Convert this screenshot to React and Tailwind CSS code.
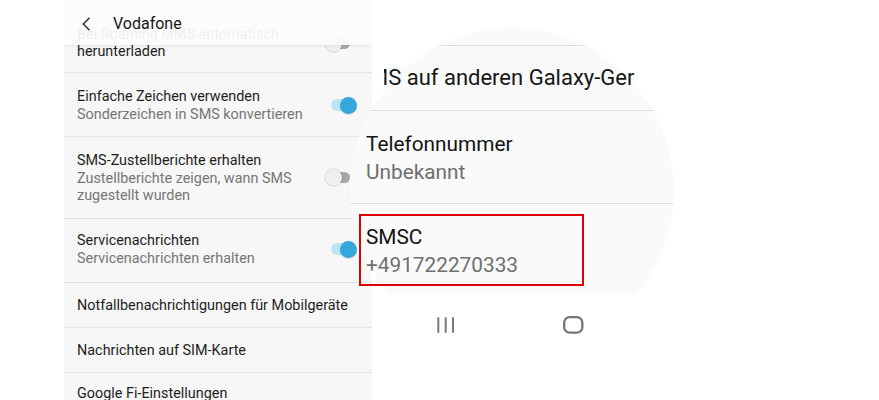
import React from "react";

function Toggle({ on }) {
  return (
    <div className="relative w-[32px] h-[17px] shrink-0">
      <div
        className={
          on
            ? "absolute left-[6px] top-[2.5px] w-[19px] h-[12px] rounded-full bg-[#bde2f3]"
            : "absolute left-[8px] top-[3px] w-[17px] h-[11px] rounded-full bg-[#a6a6a6]"
        }
      />
      <div
        className={
          on
            ? "absolute left-[15px] top-0 w-[17px] h-[17px] rounded-full bg-[#36a7da] shadow-[0_1px_1px_rgba(0,0,0,0.15)]"
            : "absolute left-0 top-0 w-[17px] h-[17px] rounded-full bg-[#efefef] shadow-[0_0_1.5px_rgba(0,0,0,0.35)]"
        }
      />
    </div>
  );
}

function Row({ title, sub, toggle, pad, titleLeading = "leading-[19px]" }) {
  return (
    <div className={`flex items-center gap-[16px] border-b border-[#e4e4e4] pl-[13px] pr-[15px] ${pad}`}>
      <div className="flex-1 min-w-0">
        <div className={`text-[14.4px] ${titleLeading} text-[#1e1e1e]`}>{title}</div>
        {sub && <div className="text-[14.4px] leading-[17px] text-[#767676]">{sub}</div>}
      </div>
      {toggle !== undefined && <Toggle on={toggle} />}
    </div>
  );
}

function LeftPanel() {
  return (
    <div className="relative w-[308px] h-[400px] shrink-0 bg-[#f7f7f7] overflow-hidden">
      <div className="pt-[12px]">
        <Row
          title="Bei Roaming MMS automatisch herunterladen"
          toggle={false}
          pad="pt-[14px] pb-[12px]"
          titleLeading="leading-[17px]"
        />
        <Row
          title="Einfache Zeichen verwenden"
          sub="Sonderzeichen in SMS konvertieren"
          toggle={true}
          pad="pt-[14px] pb-[13px]"
        />
        <Row
          title="SMS-Zustellberichte erhalten"
          sub="Zustellberichte zeigen, wann SMS zugestellt wurden"
          toggle={false}
          pad="pt-[14px] pb-[14px]"
        />
        <Row
          title="Servicenachrichten"
          sub="Servicenachrichten erhalten"
          toggle={true}
          pad="pt-[12px] pb-[15px]"
        />
        <Row title="Notfallbenachrichtigungen für Mobilgeräte" pad="pt-[13px] pb-[12px]" />
        <Row title="Nachrichten auf SIM-Karte" pad="pt-[13px] pb-[12px]" />
        <Row title="Google Fi-Einstellungen" pad="pt-[11px] pb-[12px]" />
      </div>
      <div className="absolute top-0 left-0 right-0 h-[45px] flex items-center pl-[17px] pt-[2px] bg-[#fcfcfc]/[0.94] shadow-[0_1px_3px_rgba(0,0,0,0.07)]">
        <svg width="10" height="14" viewBox="0 0 10 14" className="shrink-0">
          <path d="M8.5 0.8 L2.3 7 L8.5 13.2" fill="none" stroke="#2a2a2a" strokeWidth="1.4" />
        </svg>
        <span className="ml-[22px] text-[16px] text-[#151515]">Vodafone</span>
      </div>
    </div>
  );
}

function Magnifier() {
  return (
    <div className="absolute left-[350px] top-[28px] w-[324px] h-[324px]">
      {/* circle background with clipped dividers */}
      <div className="absolute inset-0 rounded-full bg-[#fafafa] overflow-hidden flex flex-col">
        <div className="h-[17px] shrink-0" />
        <div className="h-px shrink-0 bg-[#dedede]" />
        <div className="h-[64px] shrink-0" />
        <div className="h-px shrink-0 bg-[#dedede]" />
        <div className="h-[92px] shrink-0" />
        <div className="h-px shrink-0 bg-[#dedede]" />
        <div className="h-[91px] shrink-0" />
        <div className="flex-1 bg-white" />
      </div>
      {/* magnified content */}
      <div className="absolute inset-0 flex flex-col text-[20.8px]">
        <div className="h-[18px] shrink-0" />
        <div className="h-[64px] shrink-0 pt-[19px]">
          <div className="ml-[34px] w-[251px] overflow-hidden">
            <div className="ml-[-15px] text-[22px] leading-[26px] whitespace-nowrap text-[#161616]">
              MS auf anderen Galaxy-Geräten synchronisieren
            </div>
          </div>
        </div>
        <div className="h-px shrink-0" />
        <div className="h-[92px] shrink-0 pt-[19px] pl-[16px] leading-[28px]">
          <div className="text-[#131313]">Telefonnummer</div>
          <div className="text-[#6f6f6f]">Unbekannt</div>
        </div>
        <div className="h-px shrink-0" />
        <div className="h-[91px] shrink-0 pt-[19px] pl-[16px] leading-[28px]">
          <div className="text-[#131313]">SMSC</div>
          <div className="text-[#6f6f6f]">+491722270333</div>
        </div>
        <div className="h-[60px] shrink-0 flex items-center pl-[87px] gap-[108px]">
          <svg width="18" height="16" viewBox="0 0 18 16">
            <rect x="0.3" y="0" width="2" height="16" rx="1" fill="#7a7a7a" />
            <rect x="7.7" y="0" width="2" height="16" rx="1" fill="#7a7a7a" />
            <rect x="15" y="0" width="2" height="16" rx="1" fill="#7a7a7a" />
          </svg>
          <svg width="21" height="18" viewBox="0 0 21 18">
            <rect x="1.15" y="1.15" width="18.2" height="15.5" rx="5.5" fill="none" stroke="#777777" strokeWidth="2.3" />
          </svg>
        </div>
      </div>
      {/* highlight */}
      <div className="absolute left-[9px] top-[186px] w-[225px] h-[72px] border-2 border-[#e00000]" />
    </div>
  );
}

export default function App() {
  return (
    <div className="relative w-[879px] h-[400px] bg-white overflow-hidden flex font-[Roboto,sans-serif]">
      <div className="w-[64px] shrink-0" />
      <LeftPanel />
      <Magnifier />
    </div>
  );
}
